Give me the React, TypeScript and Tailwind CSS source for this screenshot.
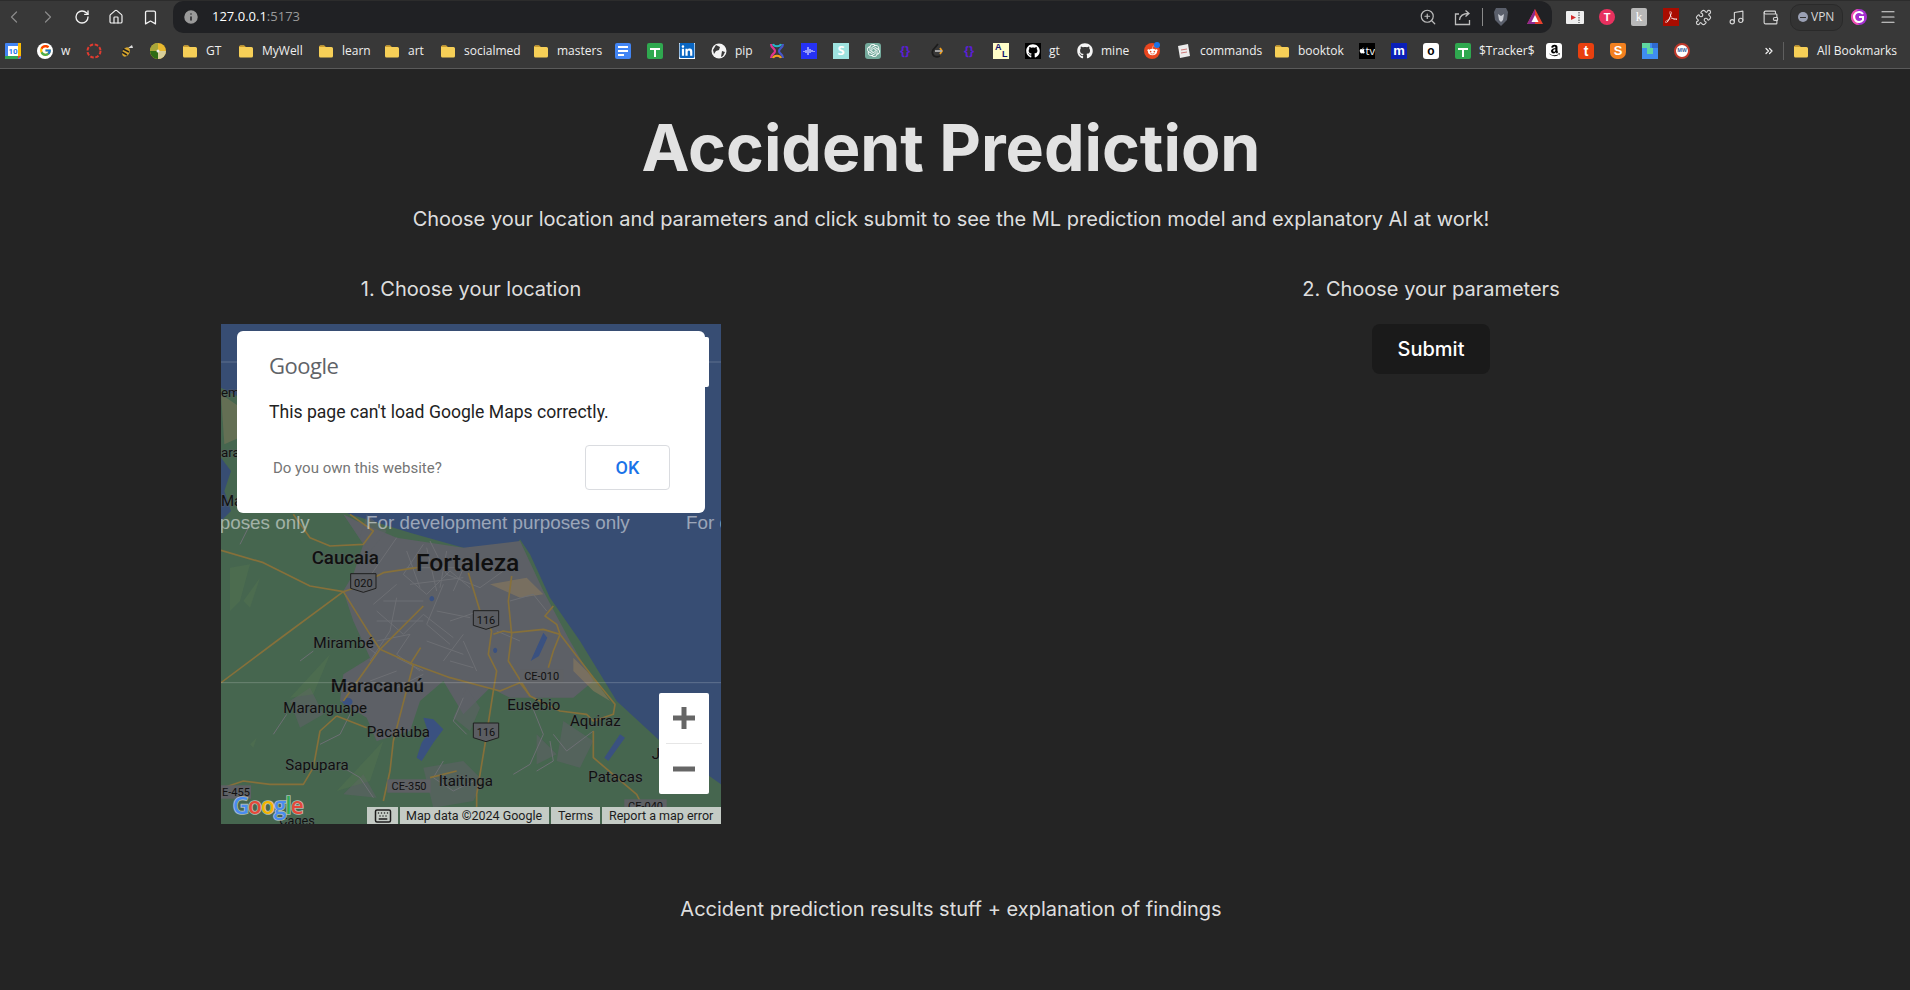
import type { ReactNode } from "react";
import { Bookmark, ChevronLeft, ChevronRight, ChevronsRight, House, Info, Menu, Music, Puzzle, RotateCw, Wallet, ZoomIn, Keyboard } from "lucide-react";
import { FaGithub, FaLinkedin, FaRedditAlien, FaAmazon, FaApple } from "react-icons/fa";
import { FcGoogle } from "react-icons/fc";
import { SiOpenai, SiAdobeacrobatreader } from "react-icons/si";

function FolderIcon() {
  return (
    <svg width="16" height="16" viewBox="0 0 16 16">
      <path d="M1 4a1.5 1.5 0 0 1 1.5-1.5h3.6L7.6 4h5.9A1.5 1.5 0 0 1 15 5.500V13a1.500 1.500 0 0 1-1.500 1.500h-11A1.500 1.500 0 0 1 1 13z" fill="#f6cf57" />
      <path d="M1 4a1.5 1.5 0 0 1 1.5-1.5h3.6L7.600 4H1z" fill="#c99a2e" />
    </svg>
  );
}

function Square({ className, children }: { className: string; children?: ReactNode }) {
  return <div className={`w-4 h-4 flex items-center justify-center overflow-hidden text-[11px] font-bold leading-none ${className}`}>{children}</div>;
}

function SheetIcon() {
  return (
    <Square className="bg-[#2fa84f] rounded-[2px] relative">
      <div className="absolute w-[10px] h-[2px] bg-white top-[5px] left-[3px]" />
      <div className="absolute w-[2px] h-[9px] bg-white top-[5px] left-[7px]" />
    </Square>
  );
}

function Braces() {
  return <Square className="text-[#5b1fd6] text-[13px]">{"{}"}</Square>;
}

const bookmarks: { icon: ReactNode; label?: string; w?: string }[] = [
  { icon: <svg width="16" height="16" viewBox="0 0 16 16"><rect width="16" height="16" rx="1" fill="#4285f4" /><rect x="3" y="3" width="10" height="10" fill="#fff" /><path d="M13 0h3v13h-3z" fill="#fbbc04" /><path d="M0 13h13v3H0z" fill="#34a853" /><path d="M13 13h3l-3 3z" fill="#ea4335" /><text x="8" y="11" fontSize="8" textAnchor="middle" fill="#1a73e8" fontFamily="Roboto, sans-serif" fontWeight="700">10</text></svg> },
  { icon: <div className="w-4 h-4 rounded-full bg-white flex items-center justify-center"><FcGoogle size={13} /></div>, label: "w", w: "w-[9px]" },
  { icon: <svg width="16" height="16" viewBox="0 0 16 16"><circle cx="8" cy="8" r="6.500" fill="none" stroke="#e23b30" strokeWidth="2" strokeDasharray="3.500 1.600" /></svg> },
  { icon: <svg width="16" height="16" viewBox="0 0 16 16"><ellipse cx="8" cy="9" rx="3.500" ry="5" fill="#d9a72c" transform="rotate(30 8 9)" /><path d="M5 6l6 3M4 9l5 3" stroke="#222" strokeWidth="1.500" /><path d="M10 5l4-3 1 3z" fill="#ddd" /></svg> },
  { icon: <svg width="16" height="16" viewBox="0 0 16 16"><circle cx="8" cy="8" r="8" fill="#e9b92f" /><path d="M8 0a8 8 0 0 0-8 8h8z" fill="#a8a63a" /><path d="M0 8a8 8 0 0 0 8 8V8z" fill="#2f6b16" /><path d="M8 8h8a8 8 0 0 1-8 8z" fill="#d8cf9a" /><circle cx="8" cy="8" r="1.500" fill="#eee" /></svg> },
  { icon: <FolderIcon />, label: "GT", w: "w-[16px]" },
  { icon: <FolderIcon />, label: "MyWell", w: "w-[40px]" },
  { icon: <FolderIcon />, label: "learn", w: "w-[26px]" },
  { icon: <FolderIcon />, label: "art", w: "w-[16px]" },
  { icon: <FolderIcon />, label: "socialmed", w: "w-[53px]" },
  { icon: <FolderIcon />, label: "masters", w: "w-[42px]" },
  { icon: <Square className="bg-[#4285f4] rounded-[2px] flex-col gap-[2px]"><div className="w-[10px] h-[2px] bg-white" /><div className="w-[10px] h-[2px] bg-white" /><div className="w-[6px] h-[2px] bg-white self-start ml-[3px]" /></Square> },
  { icon: <SheetIcon /> },
  { icon: <div className="w-4 h-4 flex items-center justify-center bg-white"><FaLinkedin size={17} color="#0a66c2" /></div> },
  { icon: <svg width="16" height="16" viewBox="0 0 16 16"><circle cx="8" cy="8" r="7.500" fill="#f4f4f4" /><path d="M5 2l4 2-1 3-3 1-2 3-1-4zM11 8l3 1-2 4-2 1z" fill="#383838" /></svg>, label: "pip", w: "w-[18px]" },
  { icon: <svg width="16" height="16" viewBox="0 0 16 16" fill="none" strokeWidth="2.200"><path d="M2 1c0 4 4 4 4 7s-4 3-4 7" stroke="#e0338f" /><path d="M14 1c0 4-4 4-4 7s4 3 4 7" stroke="#4656c8" /><path d="M4 1c1 3 7 3 8 0" stroke="#27b5c9" /><path d="M4 15c1-3 7-3 8 0" stroke="#f2a01f" /></svg> },
  { icon: <Square className="bg-[#2632f5]"><svg width="12" height="10" viewBox="0 0 12 10" stroke="#fff" strokeWidth="1"><path d="M1 5v1M3 4v3M5 1v8M7 3v4M9 4v2M11 5v1" /></svg></Square> },
  { icon: <Square className="bg-[#9ee3e0] text-white text-[13px]">S</Square> },
  { icon: <Square className="bg-[#74aa9c] rounded-[3px] text-white"><SiOpenai size={13} /></Square> },
  { icon: <Braces /> },
  { icon: <svg width="16" height="16" viewBox="0 0 16 16" fill="none" strokeWidth="1.800"><path d="M9 1L4 7c-1 2-1 4 1 6 2 1 4 1 6 0" stroke="#1c1c1c" /><path d="M11 5l2 3-2 3" stroke="#f0a020" /><path d="M6 8h7" stroke="#b0b0b0" /></svg> },
  { icon: <Braces /> },
  { icon: <div className="w-4 h-4 bg-[#fffdc8] relative text-[#12126e] font-bold leading-none font-['Liberation_Sans',sans-serif]"><span className="absolute left-[2px] top-0 text-[9px]">A</span><span className="absolute left-[9px] top-[7px] text-[9px]">L</span></div> },
  { icon: <Square className="bg-black text-white"><FaGithub size={14} /></Square>, label: "gt", w: "w-[12px]" },
  { icon: <FaGithub size={16} color="#f5f5f5" />, label: "mine", w: "w-[27px]" },
  { icon: <div className="w-4 h-4 rounded-full bg-[#e8461f] flex items-center justify-center text-white relative"><FaRedditAlien size={11} /><div className="absolute w-[6px] h-[6px] rounded-full bg-[#1a73e8] -top-[1px] right-0" /></div> },
  { icon: <svg width="16" height="16" viewBox="0 0 16 16"><path d="M2 3l10-2 2 12-10 2z" fill="#ececec" /><path d="M5 7l6-1M5 10l6-1" stroke="#c77" /></svg>, label: "commands", w: "w-[58px]" },
  { icon: <FolderIcon />, label: "booktok", w: "w-[45px]" },
  { icon: <Square className="bg-black text-white text-[7px] font-normal"><FaApple size={7} />tv</Square> },
  { icon: <Square className="bg-[#0a1fb8] text-white text-[13px] font-['Liberation_Sans',sans-serif]">m</Square> },
  { icon: <Square className="bg-white rounded-[3px] text-black text-[12px] font-['Liberation_Sans',sans-serif]">o</Square> },
  { icon: <SheetIcon />, label: "$Tracker$", w: "w-[51px]" },
  { icon: <Square className="bg-white rounded-[3px] text-black"><FaAmazon size={13} /></Square> },
  { icon: <Square className="bg-[#e8400f] rounded-[3px] text-white text-[14px] font-['Liberation_Sans',sans-serif]">t</Square> },
  { icon: <Square className="bg-[#f2801f] rounded-b-[7px] rounded-t-[2px] text-white text-[13px] font-['Liberation_Sans',sans-serif]">S</Square> },
  { icon: <svg width="16" height="16" viewBox="0 0 16 16"><rect width="16" height="16" fill="#3f8df0" /><path d="M0 0h8v5h3v6H5V5H0z" fill="#5fd6a0" /><path d="M10 0h6v5h-6z" fill="#2f6ad0" /></svg> },
  { icon: <div className="w-4 h-4 rounded-full bg-white border-2 border-[#c0392b] flex items-center justify-center text-[5px] font-bold text-[#34609c]">MW</div> },
];

function Toolbar() {
  return (
    <div className="h-[33px] flex items-center bg-[#383838] border-t border-[#2c2c2c] pl-[4px] pr-[11px] text-[#d6d6d6]">
      <div className="flex items-center gap-[14px] w-[156px]">
        <div className="w-[20px] flex justify-center text-[#8a8a8a]"><ChevronLeft size={20} strokeWidth={1.500} /></div>
        <div className="w-[20px] flex justify-center text-[#8a8a8a]"><ChevronRight size={20} strokeWidth={1.500} /></div>
        <div className="w-[20px] flex justify-center text-[#f2f2f2]"><RotateCw size={16} strokeWidth={2} /></div>
        <div className="w-[20px] flex justify-center text-[#f2f2f2]"><House size={16} strokeWidth={1.800} /></div>
        <div className="w-[20px] flex justify-center text-[#f2f2f2]"><Bookmark size={17} strokeWidth={1.800} /></div>
      </div>
      <div className="ml-[13px] w-[1379px] h-[32px] rounded-r-[12px] rounded-l-[10px] bg-[#202124] flex items-center pl-[9px] pr-[8px]">
        <Info size={18} fill="#9a9a9a" color="#202124" />
        <div className="ml-[12px] text-[13px] text-white font-['Open_Sans',sans-serif]">127.0.0.1<span className="text-[#9a9a9a]">:5173</span></div>
        <div className="ml-auto flex items-center text-[#bdbdbd]">
          <ZoomIn size={18} strokeWidth={1.600} />
          <div className="ml-[17px]">
            <svg width="17" height="17" viewBox="0 0 17 17" fill="none" stroke="currentColor" strokeWidth="1.300"><path d="M5 5H1.500v10.500h14V11" /><path d="M5.500 11c.5-4 3.500-6.500 9-6.500M11.500 1.500l3.500 3-3.500 3" /></svg>
          </div>
          <div className="ml-[11px] h-[18px] w-px bg-[#8a8a8a]" />
          <div className="ml-[10px]">
            <svg width="16" height="20" viewBox="0 0 16 20"><path d="M3 1h10l2 4-1 8-6 6-6-6-1-8z" fill="#5a5f6b" /><path d="M5 7l3 2 3-2-1 6-2 2-2-2z" fill="#c9ccd3" /></svg>
          </div>
          <div className="ml-[17px]">
            <svg width="18" height="18" viewBox="0 0 18 18"><path d="M9 1l8 15H1z" fill="#e8412e" /><path d="M1 16l8-15v15z" fill="#8e2a8f" /><path d="M9 7l3.500 7h-7z" fill="#fff" /></svg>
          </div>
        </div>
      </div>
      <div className="ml-[13px] w-[20px] flex justify-center">
        <svg width="18" height="13" viewBox="0 0 18 13"><rect width="18" height="13" rx="1" fill="#efefef" /><path d="M5 4l5 2.500L5 9z" fill="#d42b2b" /><path d="M13 1v11" stroke="#777" strokeWidth="1.500" strokeDasharray="1.500 1" /></svg>
      </div>
      <div className="ml-[12px] w-[20px] flex justify-center"><div className="w-4 h-4 rounded-full bg-[#e8315f] text-white text-[11px] font-bold flex items-center justify-center font-['Liberation_Sans',sans-serif]">T</div></div>
      <div className="ml-[12px] w-[20px] flex justify-center"><div className="w-4 h-[18px] rounded-[2px] bg-[#b8b8b8] text-white text-[13px] flex items-center justify-center font-['Liberation_Serif',serif]">k</div></div>
      <div className="ml-[12px] w-[20px] flex justify-center"><div className="w-4 h-[18px] bg-[#a80c00] text-white flex items-center justify-center"><SiAdobeacrobatreader size={12} /></div></div>
      <div className="ml-[12px] w-[20px] flex justify-center"><Puzzle size={17} strokeWidth={1.600} /></div>
      <div className="ml-[13px] w-[20px] flex justify-center"><Music size={17} strokeWidth={1.600} /></div>
      <div className="ml-[14px] w-[20px] flex justify-center"><Wallet size={17} strokeWidth={1.600} /></div>
      <div className="ml-[10px] w-[53px] h-[27px] rounded-[10px] border border-[#2a2a2a] bg-[#333] flex items-center pl-[7px] gap-[3px]">
        <div className="w-[10px] h-[10px] rounded-full bg-[#9aa0b4] flex items-center justify-center"><div className="w-[6px] h-px bg-[#333]" /></div>
        <span className="text-[12px] text-[#d8d8d8] font-['Open_Sans',sans-serif]">VPN</span>
      </div>
      <div className="ml-[8px]">
        <svg width="16" height="18" viewBox="0 0 16 18"><circle cx="8" cy="9" r="8" fill="#a42fd0" /><path d="M0 9a8 8 0 0 1 8-8c-4 2-5 8 0 16a8 8 0 0 1-8-8z" fill="#f050b0" /><path d="M12 6a5 5 0 1 0 0 6V9H8" fill="none" stroke="#fff" strokeWidth="2" /></svg>
      </div>
      <div className="ml-[12px] text-[#e0e0e0]"><Menu size={18} strokeWidth={1.600} /></div>
    </div>
  );
}

function BookmarkBar() {
  return (
    <div className="h-[36px] flex items-center bg-[#383838] border-b border-[#5a5a5a] pl-[5px] pr-[13px] text-[12px] text-[#efefef] font-['Open_Sans',sans-serif]">
      <div className="flex items-center gap-[16px]">
        {bookmarks.map((b, i) => (
          <div key={i} className="flex items-center gap-[8px]">
            <div className="w-4 h-4 flex items-center justify-center">{b.icon}</div>
            {b.label && <span className={`${b.w} whitespace-nowrap`}>{b.label}</span>}
          </div>
        ))}
      </div>
      <div className="ml-auto flex items-center">
        <ChevronsRight size={12} strokeWidth={2.500} />
        <div className="ml-[8px] mr-[9px] h-[18px] w-px bg-[#5f5f5f]" />
        <FolderIcon />
        <span className="ml-[8px] whitespace-nowrap">All Bookmarks</span>
      </div>
    </div>
  );
}

const streets = [
  "M480 480l60-90 20-100M560 110l-90 130M640 130l-60 90 70 60 70-70 60 50M500 330l80 70 60-60 90 70M560 250l-70 60M660 120l50 100 100 40 70-50M700 250l-50 120 70 60M720 360l90-30M600 400l-40 60 70 50M560 470l80 40M700 480l60-80M900 300l70-20 40 50M930 420l-70-30M450 420l50 40",
  "M520 300h120M500 360h140M500 420l100-20M590 150l40 110M650 140l30 130M710 150l-20 110M770 180l-40 90M590 200h180M600 250l160-20M680 330l100 20M650 420l110 40M760 420l40 90M720 480l70 20M480 540l80-30M560 560l80-40",
  "M430 620l-40 80-60 30M700 780l-30 50 60 40 60-30M960 600l40 100-40 90-50 30M760 590l-30 70 40 40M1150 690l-80 60-40-50M1020 720l10 60-50 30M400 800l50 30 40 60M90 130l30-60M270 480l40-30M230 640l-40 60",
];

const labels: [string, number, number, number, number][] = [
  ["Caucaia", 305, 190, 56, 500],
  ["Fortaleza", 618, 210, 74, 500],
  ["Mirambé", 310, 442, 46, 400],
  ["Maracanaú", 362, 574, 56, 500],
  ["Maranguape", 220, 636, 45, 400],
  ["Pacatuba", 470, 707, 45, 400],
  ["Sapupara", 226, 807, 45, 400],
  ["Itaitinga", 686, 856, 45, 400],
  ["Eusébio", 892, 628, 45, 400],
  ["Aquiraz", 1080, 675, 45, 400],
  ["Patacas", 1135, 844, 45, 400],
  ["J", 1325, 775, 45, 400],
  ["Cages", 208, 972, 38, 400],
  ["em", 33, -312, 40, 400],
  ["ara", 33, -132, 40, 400],
  ["Ma", 33, 14, 45, 400],
];

const roadBoxes: [string, number, number, number, number][] = [
  ["CE-010", 930, 505, 130, 40],
  ["CE-350", 532, 835, 130, 40],
  ["E-455", 33, 853, 90, 40],
  ["CE-040", 1243, 895, 127, 40],
];

function Shield({ x, y, text }: { x: number; y: number; text: string }) {
  return (
    <g>
      <path d={`M${x - 38} ${y - 28}h76v44l-38 12-38-12z`} fill="#5b5d62" stroke="#1f1f1f" strokeWidth="3" strokeLinejoin="round" />
      <text x={x} y={y + 12} fontSize="33" textAnchor="middle" fill="#111">{text}</text>
    </g>
  );
}

// viewBox is in 3x pixels, so numbers read straight off the zoomed crops
function MapDrawing() {
  return (
    <svg width="500" height="500" viewBox="33 -531 1500 1500" className="block font-['Roboto',sans-serif]">
      <rect x="33" y="-531" width="1500" height="1500" fill="#374d73" />
      <path d="M33 -340L110 -300 200 -100 300 -20 420 40 600 95 760 140 900 160 930 115 960 160 1020 290 1110 420 1220 600 1350 720 1533 850V969H33z" fill="#46664f" />
      <path d="M33 -130l30 40-20 60 20 60-30 30z" fill="#374d73" />
      <path d="M33 -320l60 40 40 70-90 40z" fill="#8a7a5c" opacity="0.45" />
      <path d="M430 220L460 130 400 40 440 60 560 110 760 140 930 120 1000 270 1080 420 1150 540 1090 590 960 590 900 590 840 560 760 640 700 540 630 600 600 690 500 720 470 650 390 600 400 520 480 470 430 360 400 270z" fill="#5d6066" />
      <path d="M640 800l120-20 60 60-30 60-120 20zM1060 660l90 60-40 80-70-20zM980 700l60 60-60 30zM400 880l60-60 40 70zM240 600l60-40 40 80-70 40zM470 40l60 50-50 60-30-40zM770 560l40 60-30 70-50-40z" fill="#5d6066" opacity="0.6" />
      <path d="M840 250l110-20 50 50-70 10zM1090 470l60 60 50 70-50-30-60-60z" fill="#8a7a5c" opacity="0.6" />
      <path d="M60 200l60-10-30 110-30 30zM100 300l50-70-30 90zM240 590l120-130-50 120zM380 870l140-150-40 120zM120 730l20-20-10 30z" fill="#547650" opacity="0.4" />
      {streets.map((d, i) => (
        <path key={i} d={d} fill="none" stroke="#6d6f74" strokeWidth="3" />
      ))}
      <path d="M640 650l30 5 30 30-30 40-35 55-15-10 15-45 20-30zM412 590a15 12 0 1 0 1 0zM1000 395l12 15-25 55-25 15 20-45zM1230 700l15 10-50 70-12-10zM665 285a7 8 0 1 0 1 0zM855 440a6 8 0 1 0 1 0z" fill="#3a5180" />
      <g fill="none" stroke="#86703a" strokeWidth="5" strokeLinejoin="round">
        <path d="M33 148L160 185 300 255 400 272 430 262 520 215 620 200" />
        <path d="M33 545L200 420 400 272 480 400 510 445 610 490 720 530 870 570 930 545 960 585 1050 630 1130 640 1150 660 1210 640 1215 610 1150 530 1050 400 1040 370 1005 345 1030 315" />
        <path d="M510 445L640 315M400 600L510 445M600 490L632 440M610 490L550 720 540 810 520 900" />
        <path d="M775 215L810 330 845 390 835 460 860 510 850 570 825 730 800 880 800 960" />
        <path d="M905 225L895 300 905 400 895 480 960 585M850 400L880 390 905 395 1000 385 1050 400 1030 450 1015 500" />
        <path d="M380 645L470 680M380 645L330 690 310 800 280 850 180 850 100 840 40 860M1150 690V770L1280 880 1300 920M250 40L300 110 360 135 460 130 490 90 420 40M660 830L740 810" />
      </g>
      {roadBoxes.map(([t, x, y, w, h]) => (
        <g key={t}>
          <rect x={x} y={y} width={w} height={h} fill="#5e6064" />
          <text x={x + w / 2} y={y + 31} fontSize="33" textAnchor="middle" fill="#111">{t}</text>
        </g>
      ))}
      <Shield x={460} y={246} text="020" />
      <Shield x={828} y={357} text="116" />
      <Shield x={828} y={694} text="116" />
      {labels.map(([t, x, y, size, weight]) => (
        <text key={t} x={x} y={y} fontSize={size} fontWeight={weight} fill="#101010" stroke="#5d6066" strokeOpacity="0.5" strokeWidth="4" paintOrder="stroke">{t}</text>
      ))}
      <path d="M33 -417H1533M33 545H1533" stroke="#ffffff" strokeOpacity="0.3" strokeWidth="2" />
      {[-492, 468, 1428].map((x) => (
        <text key={x} x={x} y={85} fontSize="56.500" fill="#ffffff" fillOpacity="0.5" className="font-['Liberation_Sans',sans-serif]">For development purposes only</text>
      ))}
      <text x={68} y={938} fontSize="68" fontWeight="600" letterSpacing="-3" stroke="#dfe5e0" strokeOpacity="0.7" strokeWidth="5" paintOrder="stroke" className="font-['Open_Sans',sans-serif]">
        <tspan fill="#4a8cf0">G</tspan><tspan fill="#e5493a">o</tspan><tspan fill="#f4b400">o</tspan><tspan fill="#4a8cf0">g</tspan><tspan fill="#34a853">l</tspan><tspan fill="#e5493a">e</tspan>
      </text>
    </svg>
  );
}

function GoogleMap() {
  return (
    <div className="relative w-[500px] h-[500px] overflow-hidden font-['Roboto',sans-serif]">
      <MapDrawing />
      <div className="absolute left-[16px] top-[13px] w-[472px] h-[50px] bg-white rounded-[2px]" />
      <div className="absolute left-[16px] top-[7px] w-[468px] h-[182px] bg-white rounded-[6px] pl-[32px] pr-[35px] pt-[19px]">
        <div className="text-[22px] leading-[30px] text-[#5f6368] tracking-[-0.5px] font-['Open_Sans',sans-serif]">Google</div>
        <div className="mt-[20px] text-[17.600px] leading-[24px] text-[#222]">This page can't load Google Maps correctly.</div>
        <div className="mt-[21px] flex items-center justify-between">
          <span className="ml-[4px] mt-[2px] text-[15px] text-[#757575]">Do you own this website?</span>
          <div className="w-[85px] h-[45px] rounded-[4px] border border-[#dadce0] flex items-center justify-center text-[18px] font-medium text-[#1a73e8]">OK</div>
        </div>
      </div>
      <div className="absolute right-[12px] top-[369px] w-[50px] h-[101px] bg-white rounded-[2px] flex flex-col items-center text-[#666]">
        <div className="h-[50px] flex items-center justify-center">
          <svg width="22" height="22" viewBox="0 0 22 22" fill="currentColor"><path d="M0 8.500h22v5H0z" /><path d="M8.500 0h5v22h-5z" /></svg>
        </div>
        <div className="w-[36px] h-px bg-[#e6e6e6]" />
        <div className="h-[50px] flex items-center justify-center">
          <svg width="22" height="22" viewBox="0 0 22 22" fill="currentColor"><path d="M0 8.500h22v5H0z" /></svg>
        </div>
      </div>
      <div className="absolute right-0 bottom-0 h-[17px] flex gap-[2px] text-[12.500px] leading-[17px] text-[#1c1c1c]">
        <div className="w-[31px] bg-[#c4cbc5] flex items-center justify-center"><Keyboard size={18} strokeWidth={2} /></div>
        <div className="w-[149px] bg-[#c4cbc5] pl-[6px] whitespace-nowrap">Map data ©2024 Google</div>
        <div className="w-[49px] bg-[#c4cbc5] pl-[7px]">Terms</div>
        <div className="w-[119px] bg-[#c4cbc5] pl-[7px] whitespace-nowrap">Report a map error</div>
      </div>
    </div>
  );
}

export default function App() {
  return (
    <div className="w-[1910px] h-[990px] overflow-hidden bg-[#242424] font-['Inter',sans-serif] text-[#ffffffde]">
      <Toolbar />
      <BookmarkBar />
      <main className="flex flex-col items-center">
        <h1 className="mt-[39px] mr-[8px] text-[64.400px] leading-[80px] font-bold">Accident Prediction</h1>
        <p className="mt-[15px] mr-[8px] text-[20px] leading-[32px]">Choose your location and parameters and click submit to see the ML prediction model and explanatory AI at work!</p>
        <div className="mt-[39px] w-full flex justify-between pr-[8px]">
          <section className="w-[942px] flex flex-col items-center">
            <h2 className="text-[20px] leading-[30px]">1. Choose your location</h2>
            <div className="mt-[20px]"><GoogleMap /></div>
          </section>
          <section className="w-[942px] flex flex-col items-center">
            <h2 className="text-[20px] leading-[30px]">2. Choose your parameters</h2>
            <button className="mt-[20px] w-[118px] h-[50px] rounded-[8px] bg-[#1a1a1a] text-[20px] font-medium text-white">Submit</button>
          </section>
        </div>
        <p className="mt-[70px] mr-[8px] text-[20px] leading-[30px]">Accident prediction results stuff + explanation of findings</p>
      </main>
    </div>
  );
}
